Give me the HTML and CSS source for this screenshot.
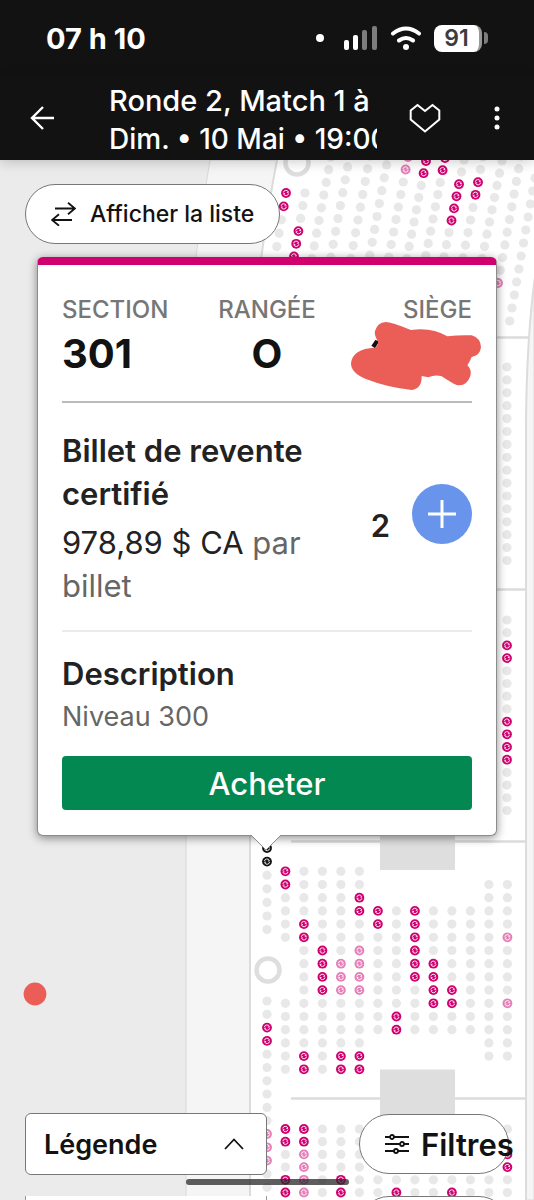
FILE: index.html
```html
<!DOCTYPE html>
<html lang="fr">
<head>
  <meta charset="UTF-8" />
  <meta name="viewport" content="width=device-width, initial-scale=1" />
  <title>Ronde 2, Match 1</title>
  <link rel="stylesheet" href="styles.css">
</head>
<body>

<div class="status">
  <span class="time">07 h 10</span>
  <div class="status-icons">
    <svg width="8" height="8" viewBox="0 0 8 8"><circle cx="4" cy="4" r="4" fill="#fff"/></svg>
    <svg class="signal" width="34" height="26" viewBox="0 0 34 26">
      <rect x="0" y="15" width="5" height="10" rx="2" fill="#fff"/>
      <rect x="9" y="10" width="5" height="15" rx="2" fill="#fff"/>
      <rect x="18" y="5" width="5" height="20" rx="2" fill="#7d7d7d"/>
      <rect x="28" y="1" width="5" height="24" rx="2" fill="#7d7d7d"/>
    </svg>
    <svg class="wifi" width="32" height="26" viewBox="0 0 32 26" fill="none" stroke="#fff" stroke-width="4" stroke-linecap="round">
      <path d="M3 8.500Q16-1.500 29 8.500M9 15.500Q16 10.500 23 15.500"/>
      <circle cx="16" cy="22" r="3" fill="#fff" stroke="none"/>
    </svg>
    <div class="battery"><span class="level">91</span></div>
  </div>
</div>

<header class="topbar">
  <button class="icon-btn" aria-label="Retour">
    <svg width="24" height="24" viewBox="0 0 24 24" fill="none" stroke="#fff" stroke-width="2.400"><path d="M24 12H2M13 1L2 12L13 23"/></svg>
  </button>
  <div class="event">
    <h1>Ronde 2, Match 1 à</h1>
    <p>Dim. • 10 Mai • 19:00</p>
  </div>
  <button class="icon-btn" aria-label="Favori">
    <svg width="32" height="30" viewBox="0 0 32 30" fill="none" stroke="#fff" stroke-width="2"><path d="M8.500 2L16 8L23.500 2L30.300 7.500V16.500L16 28.500L1.700 16.500V7.500Z"/></svg>
  </button>
  <button class="icon-btn more" aria-label="Plus">
    <svg width="6" height="24" viewBox="0 0 6 24" fill="#fff"><circle cx="3" cy="3" r="2.500"/><circle cx="3" cy="12" r="2.500"/><circle cx="3" cy="21" r="2.500"/></svg>
  </button>
</header>

<main class="stage">
  <svg class="map" viewBox="0 160 534 1040" preserveAspectRatio="xMinYMin slice">
    <defs>
      <symbol id="resale" viewBox="-5 -5 10 10" overflow="visible">
        <circle r="4.900" fill="currentColor"/>
        <path d="M-2.600-.5A2.600 2.600 0 0 1 2.400-1M2.600.5A2.600 2.600 0 0 1-2.400 1M.9-.6H2.600M-.9.6H-2.600" fill="none" stroke="#fff" stroke-width=".9"/>
      </symbol>
    </defs>
    <rect y="160" width="534" height="1040" fill="#ebebeb"/>
    <path d="M210 160Q186 300 186 420V1200H534V160Z" fill="#f5f5f5" stroke="#d8d8d8"/>
    <path d="M277 160Q250 300 250 430V1210H526V420Q527 330 536 270V150H279Z" fill="#fff" stroke="#dcdcdc" stroke-width="2"/>
    <path d="M490 337.500H528M490 589.500H526M291 841.500H526M291 1098.500H526" stroke="#dcdcdc" stroke-width="2.500"/>
    <path d="M380 830H455V870H380ZM380 1069.500H455V1140H380Z" fill="#dedede"/>
    <g fill="#fff" stroke="#dedede" stroke-width="4.500"><circle cx="268" cy="970" r="11.500"/><circle cx="297" cy="163" r="11.500"/></g>
    <g id="seats"></g>
    <circle cx="35" cy="994" r="11.400" fill="#eb5e58"/>
  </svg>

  <button class="pill list-btn">
    <svg width="25" height="24" viewBox="0 0 25 24" fill="none" stroke="#121212" stroke-width="1.800"><path d="M4 6.500H24M17 .8L24 6.500L17 12.200M21 18H1M8 12.300L1 18L8 23.700"/></svg>
    Afficher la liste
  </button>

  <section class="ticket">
    <dl class="place">
      <div><dt>SECTION</dt><dd>301</dd></div>
      <div class="mid"><dt>RANGÉE</dt><dd>O</dd></div>
      <div class="seat"><dt>SIÈGE</dt><dd>
        <svg class="scribble" width="132" height="70" viewBox="150 185 396 210">
          <path d="M214 259L226 242L238 246L225 267Z" fill="#111"/>
          <path d="M257 188Q275 188 333 212Q395 203 442 231Q480 226 515 228Q542 236 543 264Q540 289 515 293Q510 306 502 318Q516 330 511 350Q500 382 470 377Q455 371 425 351Q405 345 385 354L365 350Q366 388 335 392Q260 384 200 360Q153 342 153 312Q157 268 225 265Q239 255 232 242Q222 228 225 215Q232 190 257 188Z" fill="#eb5e58"/>
        </svg>
      </dd></div>
    </dl>
    <div class="offer">
      <div class="offer-text">
        <h2>Billet de revente certifié</h2>
        <p class="price">978,89 $ CA <span>par billet</span></p>
      </div>
      <output class="qty">2</output>
      <button class="add" aria-label="Ajouter">
        <svg width="28" height="28" viewBox="0 0 28 28" stroke="#fff" stroke-width="3"><path d="M0 14H28M14 0V28"/></svg>
      </button>
    </div>
    <div class="desc">
      <h2>Description</h2>
      <p>Niveau 300</p>
      <button class="buy">Acheter</button>
    </div>
    <svg class="tip" width="30" height="16" viewBox="0 0 30 16"><path d="M0 0L15 15L30 0" fill="#fff" stroke="#8c8c8c"/></svg>
  </section>

  <div class="bottom">
    <button class="legend">Légende
      <svg width="20" height="12" viewBox="0 0 20 12" fill="none" stroke="#121212" stroke-width="1.800"><path d="M1 11L10 1.500L19 11"/></svg>
    </button>
    <button class="pill filters">
      <svg width="24" height="20" viewBox="0 0 24 20" fill="#fff" stroke="#121212" stroke-width="1.800"><path d="M0 3H24M0 10H24M0 17H24"/><circle cx="7" cy="3" r="2"/><circle cx="17" cy="10" r="2"/><circle cx="11" cy="17" r="2"/></svg>
      Filtres
    </button>
  </div>
  <div class="peek"><div class="peek-legend"></div><div class="peek-pill"></div></div>
  <div class="home-bar"></div>
</main>

<script>
  // . free seat, R resale, p resale (dimmed), K selected, space = gap
  const colors = { R: '#d0006f', p: '#e67fb7', K: '#121212' };

  // x, y of first seat, step x, step y, seats
  const columns = [
    [286, 193, -2.3, 13.4, 'RR...'],
    [305, 193, -2.2, 12.7, '...RRR'],
    [331, 157, -2.4, 12.7, '.........'],
    [350, 154, -2.4, 12.9, '.........'],
    [370, 156, -2.4, 12.8, '.........'],
    [389, 152, -2.4, 12.9, '.........'],
    [408, 157, -2.4, 12.5, 'pp.......'],
    [426, 161, -2.4, 12.2, 'RR.......'],
    [445, 158, -2.4, 12.2, 'RR.......'],
    [464, 160, -2.5, 12.1, '..RRRR...'],
    [483, 157, -2.5, 12.6, '..RR.....'],
    [502, 161, -2.5, 12.2, '.........'],
    [521, 156, -2.3, 12.7, '..........p'],
    [535, 178, -2.3, 13, '............'],
    [507, 367, 0, 12.9, '................'],
    [507, 620, 0, 12.7, '..RR....RRRR....'],
    [267, 848, 0, 13.6, 'KK.....'],
    [267, 1001, 0, 13.3, '..RR......ppp..']
  ];

  const blockA = [
    'RR....    ......',
    '....RR........RR',
    '......RRRR......',
    '.......ppp....RR',
    '..RR..pppp....RR',
    '   RR........',
    '   ........RR',
    '   RRRRRR....',
    '   ....RRRR..',
    '   ......RR..',
    '   ..........',
    ' ..............',
    ' ....p....p....'
  ];
  const blockB = ['RR..RR', 'RRpppp', '......', '....RR', '......', '......', '.....R',
    '......', '......', '.....R', '......', '......', '..RR..'];
  blockA.forEach((s, i) => columns.push([285.4 + i * 18.5, 871.3, 0, 13.2, s]));
  blockB.forEach((s, i) => columns.push([285.4 + i * 18.5, 1129, 0, 12.7, s]));

  let out = '';
  columns.forEach(([x, y, dx, dy, seats]) => {
    [...seats].forEach((s, i) => {
      const cx = (x + dx * i).toFixed(1);
      const cy = (y + dy * i).toFixed(1);
      if (s === '.') out += `<circle cx="${cx}" cy="${cy}" r="4.6" fill="#e8e8e8"/>`;
      else if (s !== ' ') out += `<use href="#resale" x="${cx - 5}" y="${cy - 5}" width="10" height="10" color="${colors[s]}"/>`;
    });
  });
  document.getElementById('seats').innerHTML = out;
</script>

</body>
</html>
```
FILE: styles.css
```css
* { box-sizing: border-box; }
body {
  font-family: Inter, 'Liberation Sans', sans-serif;
  color: #121212;
  background: #ebebeb;
  margin: 0;
  min-height: 100vh;
  display: flex;
  flex-direction: column;
  overflow-x: hidden;
}
button {
  font: inherit;
  color: inherit;
  cursor: pointer;
}
svg { display: block; flex: none; }
h1, h2, p, dl, dd { margin: 0; }

.status {
  background: #121212;
  color: #fff;
  height: 76px;
  padding: 0 46px;
  display: flex;
  align-items: center;
  justify-content: space-between;
}
.time { font-size: 29px; font-weight: 700; }
.status-icons { display: flex; align-items: center; }
.signal { margin: 0 12px 0 20px; }
.wifi { margin-right: 12px; }
.battery {
  display: flex;
  align-items: center;
}
.battery::after {
  content: "";
  width: 4px;
  height: 12px;
  margin-left: 2px;
  background: #7d7d7d;
  border-radius: 0 4px 4px 0;
}
.level {
  background: #fff;
  color: #3c3c3c;
  border-right: 3px solid #999;
  border-radius: 8px;
  width: 48px;
  line-height: 27px;
  text-align: center;
  font-size: 23px;
  font-weight: 600;
}

.topbar {
  background: #121212;
  color: #fff;
  height: 84px;
  padding: 0 34px 0 30px;
  display: flex;
  align-items: center;
  position: relative;
  z-index: 1;
  box-shadow: 0 2px 12px rgba(0,0,0,0.2);
}
.icon-btn { background: none; border: 0; padding: 0; }
.event {
  flex: 1;
  min-width: 0;
  margin: 4px 32px 0 55px;
  font-size: 28px;
  font-weight: 500;
  line-height: 39px;
  white-space: nowrap;
  overflow: hidden;
}
.event h1 { font-size: 29px; font-weight: 500; }
.more { margin-left: 53px; }

.stage {
  flex: 1;
  position: relative;
  overflow: hidden;
  padding-top: 24px;
  display: flex;
  flex-direction: column;
}
.map {
  position: absolute;
  inset: 0;
  width: 100%;
  height: 100%;
}
.pill {
  position: relative;
  display: flex;
  align-items: center;
  height: 60px;
  padding: 0 25px;
  background: #fff;
  border: 1px solid #777;
  border-radius: 30px;
  font-weight: 500;
  white-space: nowrap;
}
.list-btn {
  align-self: flex-start;
  margin-left: 25px;
  gap: 14px;
  font-size: 23px;
}

.ticket {
  position: relative;
  margin: 13px 37px 0;
  padding: 28px 24px 25px;
  background: #fff;
  border: 1px solid #8c8c8c;
  border-top: 8px solid #d0006f;
  border-radius: 6px;
  box-shadow: 0 2px 10px rgba(0,0,0,0.45);
}
.place {
  display: grid;
  grid-template-columns: 1fr auto 1fr;
  padding-bottom: 20px;
  border-bottom: 2px solid #bbb;
}
dt { font-size: 24px; font-weight: 500; line-height: 34px; color: #767676; }
dd { font-size: 40px; font-weight: 700; line-height: 54px; }
.mid { text-align: center; }
.seat { position: relative; text-align: right; }
.scribble { position: absolute; right: -10px; top: 28px; }
h2 { font-size: 31px; font-weight: 600; line-height: 43px; color: #222; }
.offer {
  display: flex;
  align-items: center;
  padding: 26px 0 23px;
  border-bottom: 2px solid #ebebeb;
}
.offer-text { flex: 1; padding-right: 40px; }
.price { margin-top: 6px; font-size: 31px; line-height: 43px; color: #222; }
.price span { color: #666; }
.qty { font-size: 31px; font-weight: 600; margin: 14px 22px 0 0; color: #222; }
.add {
  width: 60px;
  height: 60px;
  margin-bottom: 8px;
  border: 0;
  border-radius: 50%;
  background: #6894ec;
  display: grid;
  place-items: center;
}
.desc { padding-top: 20px; }
.desc p { font-size: 27px; line-height: 44px; color: #666; }
.buy {
  display: block;
  width: 100%;
  height: 54px;
  margin-top: 17px;
  padding: 0;
  border: 0;
  border-radius: 4px;
  background: #048851;
  color: #fff;
  font-size: 31px;
  font-weight: 500;
}
.tip { position: absolute; top: 100%; left: 50%; margin-left: -16px; }

.bottom {
  margin-top: auto;
  padding: 20px 25px 0;
  display: flex;
  justify-content: space-between;
  align-items: center;
}
.legend {
  position: relative;
  width: 50%;
  height: 62px;
  padding: 0 22px 0 18px;
  display: flex;
  align-items: center;
  justify-content: space-between;
  background: #fff;
  border: 1px solid #777;
  border-radius: 6px;
  font-size: 27px;
  font-weight: 600;
}
.filters {
  width: 150px;
  gap: 12px;
  font-size: 31px;
  font-weight: 600;
}
.peek {
  position: relative;
  height: 4px;
  margin: 21px 0 0;
  padding: 0 25px;
  display: flex;
  justify-content: space-between;
  overflow: hidden;
}
.peek-legend { width: 50%; background: #fff; border: solid #999; border-width: 0 1px; }
.peek-pill { width: 150px; height: 60px; background: #fff; border: 1px solid #777; border-radius: 30px; }
.home-bar {
  position: absolute;
  left: 50%;
  bottom: 15px;
  width: 163px;
  height: 6px;
  margin-left: -81px;
  border-radius: 3px;
  background: rgba(40,40,40,0.75);
}
```
